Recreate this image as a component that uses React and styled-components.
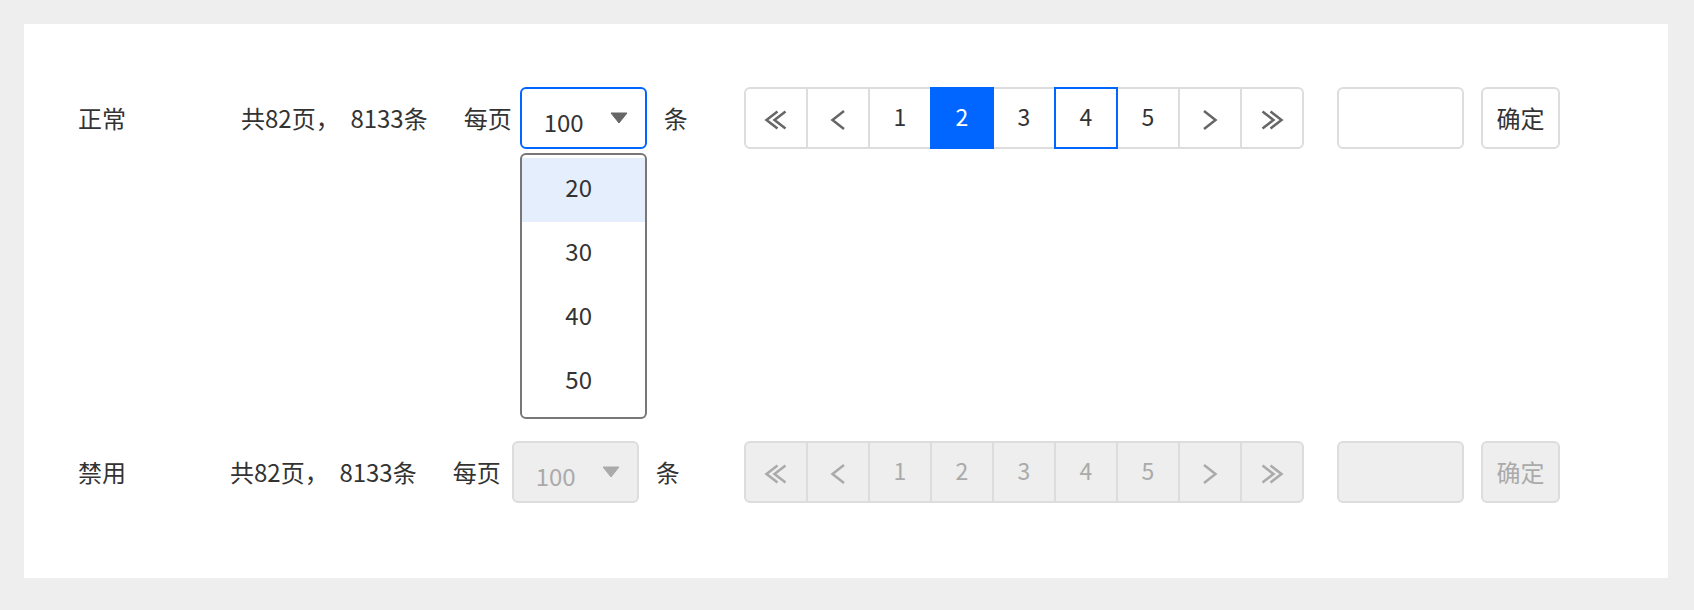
import React from "react";
import styled, { createGlobalStyle } from "styled-components";

const Global = createGlobalStyle`
  html, body { margin: 0; padding: 0; background: #eeeeee; }
  body {
    padding: 24px;
    font-family: "Noto Sans CJK SC", "Noto Sans", sans-serif;
    color: #333333;
  }
`;

const Panel = styled.div`
  box-sizing: border-box;
  width: 1644px;
  height: 554px;
  background: #ffffff;
  padding: 63px 0 75px 54px;
  display: flex;
  flex-direction: column;
  gap: 292px;
`;

const Row = styled.div`
  display: flex;
  align-items: center;
  height: 62px;
  font-size: 24px;
  line-height: 32px;
  color: #333333;
`;

const Left = styled.div`
  display: flex;
  align-items: center;
  width: 666px;
  flex: none;
  height: 62px;
`;

const Label = styled.div`
  width: ${(p) => p.$width}px;
  flex: none;
  white-space: nowrap;
`;

const Summary = styled.div`
  margin-right: 36px;
  white-space: pre;
`;

const Unit = styled.span`
  white-space: nowrap;
`;

const SelectWrap = styled.div`
  position: relative;
  margin: 0 17px 0 ${(p) => p.$gap}px;
`;

const SelectBox = styled.div`
  box-sizing: border-box;
  width: 127px;
  height: 62px;
  border: 2px solid ${(p) => (p.$disabled ? "#dddddd" : p.$focus ? "#0066ff" : "#dddddd")};
  border-radius: 6px;
  background: ${(p) => (p.$disabled ? "#eeeeee" : "#ffffff")};
  color: ${(p) => (p.$disabled ? "#aaaaaa" : "#333333")};
  display: flex;
  align-items: center;
  justify-content: space-between;
  padding: 0 17px 0 22px;
`;

const SelectValue = styled.span`
  padding-top: 7px;
`;

const Menu = styled.ul`
  position: absolute;
  top: calc(100% + 4px);
  left: 0;
  box-sizing: border-box;
  width: 127px;
  margin: 0;
  padding: 3px 0;
  list-style: none;
  background: #ffffff;
  border: 2px solid #777777;
  border-radius: 6px;
  z-index: 5;
`;

const MenuItem = styled.li`
  box-sizing: border-box;
  height: 64px;
  display: flex;
  align-items: center;
  justify-content: center;
  padding: 0 9px 6px 0;
  background: ${(p) => (p.$highlight ? "#e5eefd" : "transparent")};
  color: #333333;
`;

const Pager = styled.div`
  display: flex;
  flex: none;
  margin-right: 33px;
`;

const Cell = styled.div`
  box-sizing: border-box;
  position: relative;
  z-index: ${(p) => (p.$active || p.$focus ? 1 : 0)};
  width: 64px;
  height: 62px;
  margin-left: -2px;
  border: 2px solid ${(p) => (p.$active || p.$focus ? "#0066ff" : "#dddddd")};
  background: ${(p) => (p.$active ? "#0066ff" : p.$disabled ? "#eeeeee" : "#ffffff")};
  color: ${(p) => (p.$active ? "#ffffff" : p.$disabled ? "#aaaaaa" : "#333333")};
  font-size: 23px;
  display: flex;
  align-items: center;
  justify-content: center;
  &:first-child {
    margin-left: 0;
    border-radius: 6px 0 0 6px;
  }
  &:last-child {
    border-radius: 0 6px 6px 0;
  }
`;

const Num = styled.span`
  padding-bottom: 5px;
`;

const IconBox = styled.span`
  display: flex;
  padding-top: 4px;
`;

const JumpInput = styled.div`
  box-sizing: border-box;
  flex: none;
  width: 127px;
  height: 62px;
  margin-right: 17px;
  border: 2px solid #dddddd;
  border-radius: 6px;
  background: ${(p) => (p.$disabled ? "#eeeeee" : "#ffffff")};
`;

const OkButton = styled.div`
  box-sizing: border-box;
  flex: none;
  width: 79px;
  height: 62px;
  border: 2px solid #dddddd;
  border-radius: 6px;
  background: ${(p) => (p.$disabled ? "#eeeeee" : "#ffffff")};
  color: ${(p) => (p.$disabled ? "#aaaaaa" : "#333333")};
  display: flex;
  align-items: center;
  justify-content: center;
  font-size: 24px;
`;

const Chevron = ({ dir, double, color }) => {
  const flip = dir === "right" ? "scale(-1,1) translate(-24,0)" : undefined;
  return (
    <svg width="24" height="20" viewBox="0 0 24 20" fill="none">
      <g transform={flip} stroke={color} strokeWidth="2.5" strokeLinejoin="miter">
        {double ? (
          <>
            <path d="M13.5 1.5 L2.5 10 L13.5 18.5" />
            <path d="M21.5 1.5 L10.5 10 L21.5 18.5" />
          </>
        ) : (
          <path d="M18 1 L6.5 10 L18 19" />
        )}
      </g>
    </svg>
  );
};

const Caret = ({ color }) => (
  <svg width="18" height="12" viewBox="0 0 18 12">
    <path d="M1 1 L17 1 L9 11 Z" fill={color} stroke={color} strokeWidth="1" strokeLinejoin="round" />
  </svg>
);

const PaginationRow = ({ label, labelWidth, selectGap, disabled }) => {
  const iconColor = disabled ? "#aaaaaa" : "#666666";
  return (
    <Row>
      <Left>
        <Label $width={labelWidth}>{label}</Label>
        <Summary>{"共82页，  8133条"}</Summary>
        <Unit>每页</Unit>
        <SelectWrap $gap={selectGap}>
          <SelectBox $disabled={disabled} $focus={!disabled}>
            <SelectValue>100</SelectValue>
            <Caret color={disabled ? "#aaaaaa" : "#666666"} />
          </SelectBox>
          {!disabled && (
            <Menu>
              {[20, 30, 40, 50].map((n, i) => (
                <MenuItem key={n} $highlight={i === 0}>
                  {n}
                </MenuItem>
              ))}
            </Menu>
          )}
        </SelectWrap>
        <Unit>条</Unit>
      </Left>
      <Pager>
        <Cell $disabled={disabled}>
          <IconBox><Chevron dir="left" double color={iconColor} /></IconBox>
        </Cell>
        <Cell $disabled={disabled}>
          <IconBox><Chevron dir="left" color={iconColor} /></IconBox>
        </Cell>
        {[1, 2, 3, 4, 5].map((n) => (
          <Cell
            key={n}
            $disabled={disabled}
            $active={!disabled && n === 2}
            $focus={!disabled && n === 4}
          >
            <Num>{n}</Num>
          </Cell>
        ))}
        <Cell $disabled={disabled}>
          <IconBox><Chevron dir="right" color={iconColor} /></IconBox>
        </Cell>
        <Cell $disabled={disabled}>
          <IconBox><Chevron dir="right" double color={iconColor} /></IconBox>
        </Cell>
      </Pager>
      <JumpInput $disabled={disabled} />
      <OkButton $disabled={disabled}>确定</OkButton>
    </Row>
  );
};

export default function App() {
  return (
    <>
      <Global />
      <Panel>
        <PaginationRow label="正常" labelWidth={163} selectGap={8} />
        <PaginationRow label="禁用" labelWidth={152} selectGap={11} disabled />
      </Panel>
    </>
  );
}
